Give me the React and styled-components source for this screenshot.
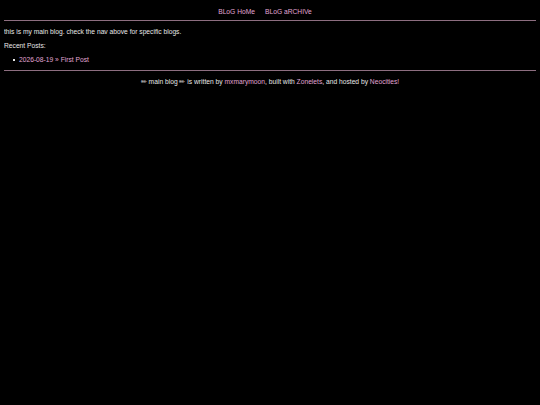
import React from "react";
import styled, { createGlobalStyle } from "styled-components";

const Global = createGlobalStyle`
  html, body { background: #000; }
  body {
    margin: 4px;
    font-family: "Liberation Sans", Arial, sans-serif;
    font-size: 6.7px;
    color: #e8e8e8;
  }
`;

const Nav = styled.nav`
  display: flex;
  justify-content: center;
  gap: 10px;
  padding: 4px 10px 4px 0;
  line-height: 8px;
`;

const Link = styled.a`
  color: #e0a6d4;
  text-decoration: none;
`;

const Rule = styled.hr`
  border: none;
  border-top: 1px solid #8d6e80;
  margin: 0;
`;

const Main = styled.main`
  padding: 7px 0 6px;
  line-height: 8px;
`;

const Para = styled.p`
  margin: 0 0 6px;
`;

const List = styled.ul`
  margin: 0;
  padding-left: 9px;
  list-style: none;
`;

const Item = styled.li`
  display: flex;
  align-items: center;
  &::before {
    content: "";
    width: 2px;
    height: 2px;
    background: #e8e8e8;
    margin-right: 4px;
  }
`;

const Footer = styled.footer`
  text-align: center;
  padding-top: 7px;
  line-height: 8px;
`;

export default function App() {
  return (
    <>
      <Global />
      <Nav>
        <Link href="#">BLoG HoMe</Link>
        <Link href="#">BLoG aRCHIVe</Link>
      </Nav>
      <Rule />
      <Main>
        <Para>this is my main blog. check the nav above for specific blogs.</Para>
        <Para>Recent Posts:</Para>
        <List>
          <Item><Link href="#">2026-08-19 » First Post</Link></Item>
        </List>
      </Main>
      <Rule />
      <Footer>
        ✏ main blog ✏ is written by <Link href="#">mxmarymoon</Link>, built with{" "}
        <Link href="#">Zonelets</Link>, and hosted by <Link href="#">Neocities!</Link>
      </Footer>
    </>
  );
}
